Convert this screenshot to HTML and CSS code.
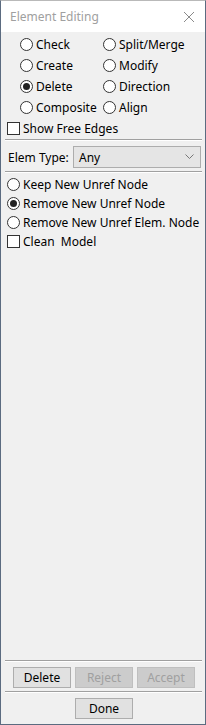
FILE: index.html
```html
<!DOCTYPE html>
<html>
<head>
<meta charset="utf-8">
<link rel="stylesheet" href="styles.css">
</head>
<body>
<div class="window">
  <div class="titlebar">
    <span class="title">Element Editing</span>
    <svg class="close" width="12" height="12" viewBox="0 0 12 12"><path d="M1 1 L11 11 M11 1 L1 11" stroke="#8a8a8a" stroke-width="1" fill="none"/></svg>
  </div>
  <div class="content">
    <div class="modes">
      <label class="opt"><span class="radio"></span>Check</label>
      <label class="opt"><span class="radio"></span>Split/Merge</label>
      <label class="opt"><span class="radio"></span>Create</label>
      <label class="opt"><span class="radio"></span>Modify</label>
      <label class="opt"><span class="radio on"></span>Delete</label>
      <label class="opt"><span class="radio"></span>Direction</label>
      <label class="opt"><span class="radio"></span>Composite</label>
      <label class="opt"><span class="radio"></span>Align</label>
    </div>
    <label class="opt chkrow"><span class="check"></span>Show Free Edges</label>
    <div class="sep"></div>
    <div class="typerow">
      <span class="typelabel">Elem Type:</span>
      <div class="select"><span>Any</span>
        <svg width="9" height="6" viewBox="0 0 9 6"><path d="M0.5 0.5 L4.5 4.5 L8.5 0.5" stroke="#777" stroke-width="1" fill="none"/></svg>
      </div>
    </div>
    <div class="sep sep2"></div>
    <div class="options">
      <label class="opt row"><span class="radio"></span>Keep New Unref Node</label>
      <label class="opt row"><span class="radio on"></span>Remove New Unref Node</label>
      <label class="opt row"><span class="radio"></span>Remove New Unref Elem. Node</label>
      <label class="opt row"><span class="check"></span>Clean&nbsp; Model</label>
    </div>
    <div class="spacer"></div>
    <div class="sep sep3"></div>
    <div class="buttons">
      <button class="btn">Delete</button>
      <button class="btn disabled">Reject</button>
      <button class="btn disabled">Accept</button>
    </div>
    <div class="sep sep4"></div>
    <div class="buttons done">
      <button class="btn">Done</button>
    </div>
  </div>
</div>
</body>
</html>
```
FILE: styles.css
```css
html, body {
  margin: 0;
  padding: 0;
  background: #f0f0f0;
}
.window {
  width: 206px;
  height: 725px;
  box-sizing: border-box;
  border: 1px solid #5b6b80;
  border-top-color: #b9b9b9;
  display: flex;
  flex-direction: column;
  font-family: "Noto Sans", "DejaVu Sans", sans-serif;
  font-size: 12px;
  color: #000;
  background: #f0f0f0;
}
.titlebar {
  height: 31px;
  background: #fff;
  display: flex;
  align-items: center;
  justify-content: space-between;
  padding: 0 10px 0 9px;
  flex-shrink: 0;
}
.title {
  color: #a0a0a0;
  font-size: 12px;
}
.close {
  display: block;
}
.content {
  flex: 1;
  display: flex;
  flex-direction: column;
}
.modes {
  display: grid;
  grid-template-columns: 83px 1fr;
  grid-auto-rows: 21px;
  padding: 2px 0 0 19px;
}
.opt {
  display: flex;
  align-items: center;
  white-space: nowrap;
  line-height: 16px;
}
.radio {
  width: 11px;
  height: 11px;
  border: 1px solid #333;
  border-radius: 50%;
  background: #fff;
  margin-right: 3px;
  position: relative;
  flex-shrink: 0;
}
.radio.on::after {
  content: "";
  position: absolute;
  left: 2px;
  top: 2px;
  width: 7px;
  height: 7px;
  border-radius: 50%;
  background: #222;
}
.check {
  width: 11px;
  height: 11px;
  border: 1px solid #333;
  background: #fff;
  margin-right: 3px;
  flex-shrink: 0;
}
.chkrow {
  height: 21px;
  padding-left: 6px;
}
.sep {
  height: 0;
  border-top: 1px solid #a0a0a0;
  border-bottom: 1px solid #fff;
  margin: 0 3px 0 4px;
}
.typerow {
  display: flex;
  align-items: center;
  padding: 5px 4px 3px 7px;
}
.typelabel {
  width: 65px;
}
.select {
  flex: 1;
  height: 20px;
  border: 1px solid #adadad;
  background: #e5e5e5;
  display: flex;
  align-items: center;
  justify-content: space-between;
  padding: 0 6px 0 5px;
}
.select svg {
  display: block;
}
.options {
  padding: 2px 0 0 6px;
}
.row {
  height: 19px;
}
.spacer {
  flex: 1;
}
.buttons {
  display: flex;
  gap: 4px;
  padding: 5px 0 3px 12px;
}
.done {
  padding: 5px 0 5px 74px;
}
.btn {
  width: 58px;
  height: 21px;
  box-sizing: border-box;
  border: 1px solid #adadad;
  background: #e1e1e1;
  font-family: "Noto Sans", "DejaVu Sans", sans-serif;
  font-size: 12px;
  color: #000;
  padding: 0;
  margin: 0;
}
.btn.disabled {
  background: #cccccc;
  border-color: #bfbfbf;
  color: #a0a0a0;
}
```
